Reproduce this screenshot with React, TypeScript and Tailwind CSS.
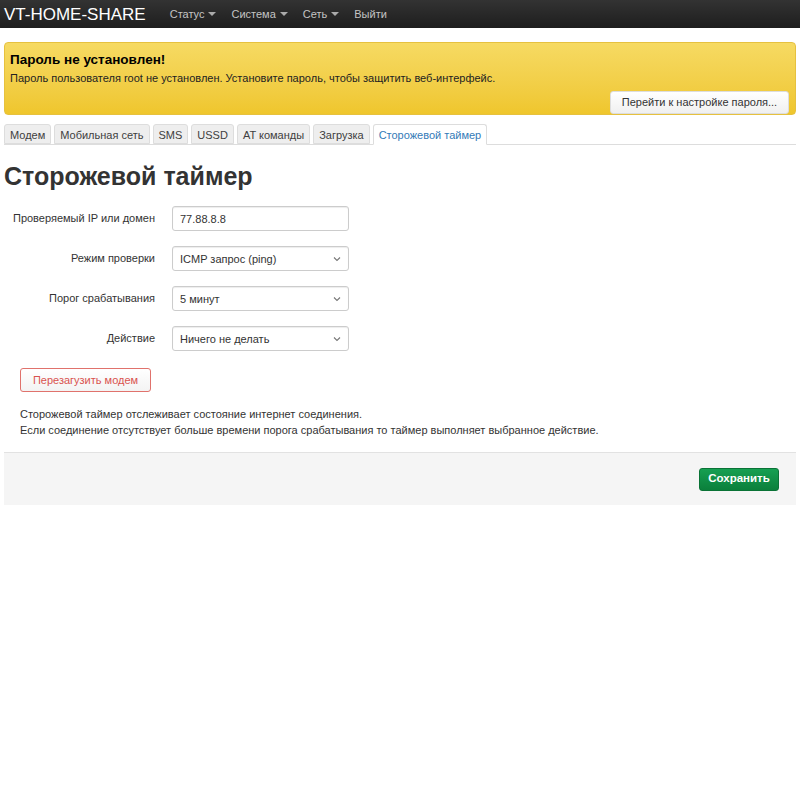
import { useState } from 'react';

const menu = ['Статус', 'Система', 'Сеть'];
const tabs = ['Модем', 'Мобильная сеть', 'SMS', 'USSD', 'AT команды', 'Загрузка', 'Сторожевой таймер'];

function Caret() {
  return <span className="ml-1 inline-block align-middle border-x-[4px] border-x-transparent border-t-[4px] border-t-[#aaa]" />;
}

function Chevron() {
  return (
    <svg className="absolute right-2 top-1/2 -translate-y-1/2 pointer-events-none" width="8" height="5" viewBox="0 0 8 5" fill="none">
      <path d="M1 1l3 3 3-3" stroke="#777" strokeWidth="1.1" />
    </svg>
  );
}

function Select({ value, options }: { value: string; options: string[] }) {
  const [v, setV] = useState(value);
  return (
    <div className="relative w-[177px]">
      <select
        value={v}
        onChange={(e) => setV(e.target.value)}
        className="appearance-none w-full h-[25px] px-[7px] text-[11px] text-[#333] bg-white border border-[#ccc] rounded-[3px] shadow-[inset_0_1px_1px_rgba(0,0,0,0.075)]"
      >
        {options.map((o) => (
          <option key={o}>{o}</option>
        ))}
      </select>
      <Chevron />
    </div>
  );
}

function Row({ label, children }: { label: string; children: React.ReactNode }) {
  return (
    <div className="flex items-center h-[25px] mb-[15px]">
      <label className="w-[151px] text-right text-[11px] text-[#333]">{label}</label>
      <div className="ml-[17px]">{children}</div>
    </div>
  );
}

export default function App() {
  const [ip, setIp] = useState('77.88.8.8');
  const font = { fontFamily: '"Liberation Sans", Arial, sans-serif' };

  return (
    <div className="min-h-[800px] bg-white text-[#333]" style={font}>
      {/* top navigation */}
      <div className="h-[28px] flex items-center bg-gradient-to-b from-[#333] to-[#1e1e1e] px-[4px]">
        <span className="text-white text-[17px] leading-none mr-[24px]">VT-HOME-SHARE</span>
        {menu.map((m) => (
          <span key={m} className="text-[#c4c4c4] text-[11px] mr-[15px] flex items-center">
            {m}
            <Caret />
          </span>
        ))}
        <span className="text-[#c4c4c4] text-[11px]">Выйти</span>
      </div>

      <div className="px-[4px]">
        {/* password warning */}
        <div className="mt-[14px] h-[73px] rounded-[4px] border border-[#e6c13f] bg-gradient-to-b from-[#f6da62] to-[#efc62c] pl-[5px] pr-[6px] pt-[8px]">
          <div className="text-[13.5px] font-bold text-black leading-[18px]">Пароль не установлен!</div>
          <div className="text-[11px] text-[#222] mt-[1px]">
            Пароль пользователя root не установлен. Установите пароль, чтобы защитить веб-интерфейс.
          </div>
          <div className="flex justify-end mt-[4px]">
            <button className="h-[23px] w-[179px] text-[11px] text-[#333] bg-gradient-to-b from-white to-[#f0f0f0] border border-[#ddd] rounded-[3px]">
              Перейти к настройке пароля...
            </button>
          </div>
        </div>

        {/* tabs */}
        <div className="mt-[9px] flex border-b border-[#ddd] h-[21px]">
          {tabs.map((t, i) => {
            const active = i === tabs.length - 1;
            return (
              <span
                key={t}
                className={
                  active
                    ? 'mr-[3px] px-[5px] text-[11px] leading-[20px] text-[#337ab7] bg-white border border-[#ddd] border-b-white rounded-t-[3px] h-[21px]'
                    : 'mr-[3px] px-[5px] text-[11px] leading-[20px] text-[#404040] bg-[#eee] border border-[#ddd] rounded-t-[3px] h-[20px]'
                }
              >
                {t}
              </span>
            );
          })}
        </div>

        <h2 className="text-[25px] font-bold text-[#333] mt-[16px] leading-[30px]">Сторожевой таймер</h2>

        <div className="mt-[15px]">
          <Row label="Проверяемый IP или домен">
            <input
              value={ip}
              onChange={(e) => setIp(e.target.value)}
              className="w-[177px] h-[25px] px-[7px] text-[11px] text-[#333] border border-[#ccc] rounded-[3px] shadow-[inset_0_1px_1px_rgba(0,0,0,0.075)] outline-none"
            />
          </Row>
          <Row label="Режим проверки">
            <Select value="ICMP запрос (ping)" options={['ICMP запрос (ping)', 'HTTP запрос']} />
          </Row>
          <Row label="Порог срабатывания">
            <Select value="5 минут" options={['1 минута', '5 минут', '10 минут', '30 минут']} />
          </Row>
          <Row label="Действие">
            <Select value="Ничего не делать" options={['Ничего не делать', 'Перезагрузить модем', 'Перезагрузить роутер']} />
          </Row>
        </div>

        <button className="ml-[16px] mt-[2px] h-[24px] w-[131px] text-[11px] text-[#d9534f] bg-gradient-to-b from-white to-[#f3f3f3] border border-[#e0726c] rounded-[3px]">
          Перезагузить модем
        </button>

        <div className="mt-[14px] ml-[16px] text-[11px] leading-[16px] text-[#333]">
          <div>Сторожевой таймер отслеживает состояние интернет соединения.</div>
          <div>Если соединение отсутствует больше времени порога срабатывания то таймер выполняет выбранное действие.</div>
        </div>

        {/* actions */}
        <div className="mt-[14px] h-[53px] bg-[#f5f5f5] border-t border-[#e2e2e2] flex items-center justify-end pr-[17px]">
          <button className="h-[23px] w-[80px] text-[11.5px] font-bold text-white bg-gradient-to-b from-[#16a052] to-[#0b7f3b] border border-[#0a7336] rounded-[3px]">
            Сохранить
          </button>
        </div>
      </div>
    </div>
  );
}
